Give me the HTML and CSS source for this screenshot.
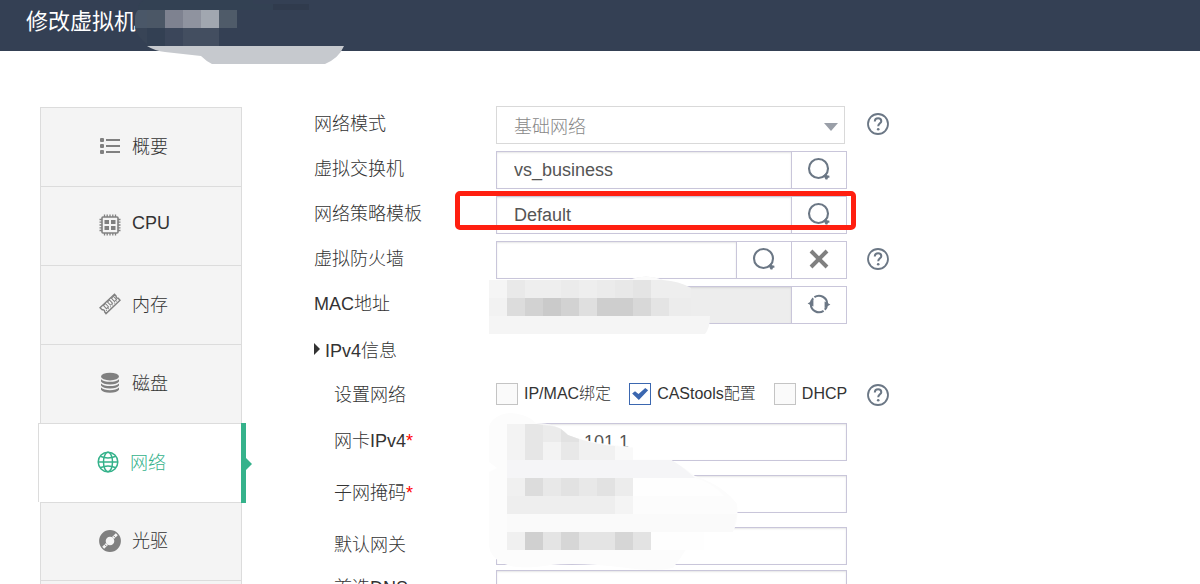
FILE: index.html
```html
<!DOCTYPE html>
<html lang="zh-CN">
<head>
	<meta charset="UTF-8">
	<meta name="viewport" content="width=device-width, initial-scale=1.0">
	<title>修改虚拟机</title>
	<link rel="stylesheet" href="styles.css">
</head>
<body>
	<!-- shared icons -->
	<svg class="sprite" aria-hidden="true">
		<symbol id="i-search" viewBox="0 0 24 24">
			<circle cx="11.5" cy="11.5" r="9.5" fill="none" stroke="currentColor" stroke-width="2.1"/>
			<path d="M16.4 18.6L18.6 16.4L20 18.2L22.4 18.8V20.8H21L20.4 22.6H18.6Z" fill="currentColor"/>
		</symbol>
		<symbol id="i-help" viewBox="0 0 22 22">
			<circle cx="11" cy="11" r="10" fill="none" stroke="currentColor" stroke-width="1.8"/>
			<path d="M7.8 8.6C7.8 6.5 9.2 5.3 11.1 5.3C13 5.3 14.3 6.5 14.3 8.2C14.3 10.2 11.2 10.6 11.2 13.3" fill="none" stroke="currentColor" stroke-width="2"/>
			<circle cx="11.2" cy="16.3" r="1.3" fill="currentColor"/>
		</symbol>
	</svg>

	<header class="top">
		<h1>修改虚拟机</h1>
		<svg class="mask mask-title" width="220" height="66" viewBox="0 0 220 66" aria-hidden="true">
			<path d="M9 0H118V4H174V10H3Q3 4 9 0Z" fill="#334153"/>
			<path d="M138 4H174V10H138Z" fill="#303b4d"/>
			<path d="M0 28V18Q0 13 3 10H12V28Z" fill="#4a5768"/>
			<path d="M12 10H30V28H12Z" fill="#4b5766"/>
			<path d="M30 10H48V28H30Z" fill="#7e8290"/>
			<path d="M48 10H66V28H48Z" fill="#8f939f"/>
			<path d="M66 10H84V28H66Z" fill="#a1a7b0"/>
			<path d="M84 10H102V28H84Z" fill="#4f5b69"/>
			<path d="M0 28H12V44Q3 38 0 28Z" fill="#384456"/>
			<path d="M12 28H30V46H12Z" fill="#334053"/>
			<path d="M30 28H48V46H30Z" fill="#3b465a"/>
			<path d="M48 28H84V46H48Z" fill="#434e60"/>
			<path d="M12 46H209Q204 58 190 64H77Q71 61 66 56L30 52Q20 51 12 46Z" fill="#c6c9ce"/>
		</svg>
	</header>

	<div class="page">
		<nav class="side">
			<a href="#summary">
				<svg class="icon" viewBox="0 0 22 22" aria-hidden="true" fill="currentColor">
					<rect x="1" y="3" width="4" height="4" rx="1"/>
					<rect x="1" y="9" width="4" height="4" rx="1"/>
					<rect x="1" y="15" width="4" height="4" rx="1"/>
					<path d="M7 4H21V6H7ZM7 10H21V12H7ZM7 16H21V18H7Z"/>
				</svg>
				<span>概要</span>
			</a>
			<a href="#cpu">
				<svg class="icon" viewBox="0 0 22 22" aria-hidden="true" fill="currentColor">
					<rect x="3" y="3" width="16" height="16" rx="1" fill="none" stroke="currentColor" stroke-width="1.6"/>
					<path d="M5.5 6H10V10H5.5ZM12 6H16.5V10H12ZM5.5 12H10V16H5.5ZM12 12H16.5V16H12Z"/>
					<path d="M5.5 .5V3M8.2 .5V3M11 .5V3M13.8 .5V3M16.5 .5V3M5.5 19V21.5M8.2 19V21.5M11 19V21.5M13.8 19V21.5M16.5 19V21.5M.5 5.5H3M.5 8.2H3M.5 11H3M.5 13.8H3M.5 16.5H3M19 5.5H21.5M19 8.2H21.5M19 11H21.5M19 13.8H21.5M19 16.5H21.5" stroke="currentColor" stroke-width="1.3"/>
				</svg>
				<span>CPU</span>
			</a>
			<a href="#memory">
				<svg class="icon" viewBox="0 0 22 22" aria-hidden="true" fill="none" stroke="currentColor">
					<path d="M1 14.8L15.5 1.3L17.2 3.2Q16.8 5.2 19.2 5.3L21 7.2L7 20.6L5.6 18.8Q6 16.6 3.2 16.8Z" stroke-width="1.4"/>
					<g stroke-width="1">
						<rect x="-1.4" y="-2.2" width="2.8" height="4.4" transform="translate(7 13.2) rotate(-43)"/>
						<rect x="-1.4" y="-2.2" width="2.8" height="4.4" transform="translate(11 9.6) rotate(-43)"/>
						<rect x="-1.4" y="-2.2" width="2.8" height="4.4" transform="translate(15 5.9) rotate(-43)"/>
						<path d="M7 18L18.6 7.2" stroke-dasharray="1.2 1.6"/>
					</g>
				</svg>
				<span>内存</span>
			</a>
			<a href="#disk">
				<svg class="icon" viewBox="0 0 22 22" aria-hidden="true" fill="currentColor">
					<ellipse cx="11" cy="4.6" rx="9" ry="3.9"/>
					<path d="M2 7.2Q5 9.8 11 9.8T20 7.2V9.4Q18 12.4 11 12.4T2 9.4Z"/>
					<path d="M2 11.4Q5 14 11 14T20 11.4V13.6Q18 16.6 11 16.6T2 13.6Z"/>
					<path d="M2 15.6Q5 18.2 11 18.2T20 15.6V17.8Q18 20.8 11 20.8T2 17.8Z"/>
				</svg>
				<span>磁盘</span>
			</a>
			<a href="#network" class="active" aria-current="page">
				<svg class="icon" viewBox="0 0 22 22" aria-hidden="true" fill="none" stroke="currentColor" stroke-width="1.5">
					<circle cx="11" cy="11" r="9.8"/>
					<ellipse cx="11" cy="11" rx="4.5" ry="9.8"/>
					<path d="M1.2 11H20.8M3.2 5.2Q11 8.6 18.8 5.2M3.2 16.8Q11 13.4 18.8 16.8"/>
				</svg>
				<span>网络</span>
			</a>
			<a href="#cdrom">
				<svg class="icon" viewBox="0 0 22 22" aria-hidden="true">
					<circle cx="11" cy="11" r="7.6" fill="none" stroke="currentColor" stroke-width="6.6"/>
					<path d="M14 8L17.8 4.2M4.2 17.8L8 14" stroke="#f4f4f4" stroke-width="2.8"/>
					<path d="M14.6 5.8L16.4 7.6M5.6 14.4L7.4 16.2" stroke="currentColor" stroke-width="1"/>
				</svg>
				<span>光驱</span>
			</a>
		</nav>

		<form class="form">
			<div class="row">
				<label for="mode">网络模式</label>
				<div class="field select">
					<select id="mode" disabled><option>基础网络</option></select>
				</div>
				<button type="button" class="help" aria-label="帮助"><svg><use href="#i-help"/></svg></button>
			</div>
			<div class="row">
				<label for="vswitch">虚拟交换机</label>
				<div class="field">
					<input type="text" id="vswitch" value="vs_business">
					<button type="button" class="addon" aria-label="选择虚拟交换机"><svg><use href="#i-search"/></svg></button>
				</div>
			</div>
			<div class="row">
				<label for="policy">网络策略模板</label>
				<div class="field">
					<input type="text" id="policy" value="Default">
					<button type="button" class="addon" aria-label="选择模板"><svg><use href="#i-search"/></svg></button>
					<span class="highlight"></span>
				</div>
			</div>
			<div class="row">
				<label for="firewall">虚拟防火墙</label>
				<div class="field">
					<input type="text" id="firewall">
					<button type="button" class="addon" aria-label="选择防火墙"><svg><use href="#i-search"/></svg></button>
					<button type="button" class="addon clear" aria-label="清除">
						<svg viewBox="0 0 24 24"><path d="M4 4L20 20M20 4L4 20" stroke="currentColor" stroke-width="4"/></svg>
					</button>
				</div>
				<button type="button" class="help" aria-label="帮助"><svg><use href="#i-help"/></svg></button>
			</div>
			<div class="row">
				<label for="mac">MAC地址</label>
				<div class="field">
					<input type="text" id="mac" disabled>
					<button type="button" class="addon" aria-label="刷新">
						<svg viewBox="0 0 24 24">
							<path d="M4 12A8.2 8.2 0 0 1 6.2 6.2M7.4 5.2A8.2 8.2 0 0 1 20.2 12M20 12A8.2 8.2 0 0 1 17.8 17.8M16.6 18.8A8.2 8.2 0 0 1 3.8 12" fill="none" stroke="currentColor" stroke-width="2"/>
							<path d="M.6 11.4L6.4 8V14.4ZM23.4 12.6L17.6 9.6V16Z" fill="currentColor"/>
						</svg>
					</button>
					<svg class="mask mask-mac" width="224" height="58" viewBox="0 0 224 58" aria-hidden="true">
						<path d="M140 4Q157 -3 174 4Q190 5 202 12V40H0V4Z" fill="#eee"/>
						<path d="M140 4Q157 -3 174 4Z" fill="#fbfbfb"/>
						<path d="M0 4H18V22H0Z" fill="#f5f5f5"/>
						<path d="M18 4H36V22H18Z" fill="#e9e9e9"/>
						<path d="M72 4H90V22H72ZM108 4H126V22H108Z" fill="#ebebeb"/>
						<path d="M126 4H144V22H126Z" fill="#e8e8e8"/>
						<path d="M144 4H162V22H144Z" fill="#e4e4e4"/>
						<path d="M0 22H18V40H0Z" fill="#f2f2f2"/>
						<path d="M18 22H36V40H18Z" fill="#dcdcdc"/>
						<path d="M36 22H54V40H36ZM72 22H90V40H72Z" fill="#d2d2d2"/>
						<path d="M54 22H72V40H54Z" fill="#cacaca"/>
						<path d="M90 22H108V40H90Z" fill="#dfdfdf"/>
						<path d="M108 22H144V40H108Z" fill="#cecece"/>
						<path d="M144 22H162V40H144Z" fill="#d8d8d8"/>
						<path d="M162 22H180V40H162Z" fill="#e4e4e4"/>
						<path d="M180 22H202V40H180Z" fill="#ececec"/>
						<path d="M0 40H221Q221 52 216 58H0Z" fill="#f5f5f5"/>
					</svg>
				</div>
			</div>

			<button type="button" class="toggle" aria-expanded="true">IPv4信息</button>

			<fieldset class="ipv4">
				<div class="row">
					<span class="name">设置网络</span>
					<div class="checks">
						<label><input type="checkbox">IP/MAC绑定</label>
						<label><input type="checkbox" checked>CAStools配置</label>
						<label><input type="checkbox">DHCP</label>
					</div>
					<button type="button" class="help" aria-label="帮助"><svg><use href="#i-help"/></svg></button>
				</div>
				<div class="row">
					<label for="ip">网卡IPv4<i>*</i></label>
					<div class="field">
						<input type="text" id="ip" class="tail" value="101.1">
						<svg class="mask mask-ip" width="250" height="160" viewBox="0 0 250 160" aria-hidden="true">
							<path d="M0 14Q5 2 22 1Q38 2 47 11Q68 11 79 23Q100 31 144 35V48H182Q192 53 206 64Q235 74 248 92Q250 108 244 120H205Q200 136 184 156Q165 160 138 156Q90 150 62 153Q20 160 6 146Q0 140 0 132V60L8 56L0 50Z" fill="#fcfcfc"/>
							<path d="M18 12H50Q70 12 79 23L90 27V48H18Z" fill="#f3f3f3"/>
							<path d="M36 12H48L54 13V48H36Z" fill="#e6e6e6"/>
							<path d="M54 13Q67 14 72 17V30H54Z" fill="#ebebeb"/>
							<path d="M72 17L79 23L90 27V30H72Z" fill="#e2e2e2"/>
							<path d="M72 30H90V48H72Z" fill="#e8e8e8"/>
							<path d="M90 27Q110 33 126 34V48H90Z" fill="#f1f1f1"/>
							<path d="M126 34L144 36V48H126Z" fill="#f9f9f9"/>
							<path d="M18 48H182Q192 53 206 66H18Z" fill="#f5f5f7"/>
							<path d="M18 66H36V84H18Z" fill="#f0f0f0"/>
							<path d="M36 66H54V84H36Z" fill="#dcdcdc"/>
							<path d="M54 66H72V84H54ZM90 66H108V84H90Z" fill="#e8e8e8"/>
							<path d="M72 66H90V84H72ZM108 66H126V84H108Z" fill="#e2e2e2"/>
							<path d="M126 66H144V84H126Z" fill="#ececec"/>
							<path d="M144 66H206Q222 70 236 84H144Z" fill="#fefefe"/>
							<path d="M18 84H126V102H18Z" fill="#eee"/>
							<path d="M126 84H144V102H126Z" fill="#f4f4f4"/>
							<path d="M18 102H248L244 120H18Z" fill="#fafafa"/>
							<path d="M18 120H36V138H18Z" fill="#f0f0f0"/>
							<path d="M36 120H54V138H36Z" fill="#d0d0d0"/>
							<path d="M54 120H72V138H54ZM90 120H126V138H90Z" fill="#e4e4e4"/>
							<path d="M72 120H90V138H72ZM126 120H144V138H126Z" fill="#d6d6d6"/>
							<path d="M144 120H162V138H144Z" fill="#e3e3e3"/>
							<path d="M162 120H215V138H162Z" fill="#fefefe"/>
						</svg>
					</div>
				</div>
				<div class="row">
					<label for="netmask">子网掩码<i>*</i></label>
					<div class="field"><input type="text" id="netmask"></div>
				</div>
				<div class="row">
					<label for="gateway">默认网关</label>
					<div class="field"><input type="text" id="gateway"></div>
				</div>
				<div class="row">
					<label for="dns">首选DNS</label>
					<div class="field"><input type="text" id="dns"></div>
				</div>
			</fieldset>
		</form>
	</div>
</body>
</html>
```

FILE: styles.css
```css
* {
	box-sizing: border-box;
}

body {
	margin: 0;
	background: #fff;
	color: #333;
	font-family: "Liberation Sans", "Noto Sans CJK SC", sans-serif;
	font-size: 18px;
	font-weight: 300;
}

input,
select,
button {
	font: inherit;
	color: inherit;
}

button {
	padding: 0;
	border: 0;
	background: none;
	cursor: pointer;
}

.sprite {
	display: none;
}

.mask {
	position: absolute;
	z-index: 1;
	pointer-events: none;
}

/* header */

.top {
	position: relative;
	display: flex;
	height: 51px;
	padding: 6px 26px 0;
	background: #344054;
}

.top h1 {
	margin: 0;
	color: #fff;
	font-size: 22px;
	font-weight: 400;
	line-height: 32px;
}

.mask-title {
	left: 135px;
	top: 0;
}

.page {
	display: flex;
	align-items: flex-start;
	gap: 72px;
	padding: 55px 40px 0;
}

/* side menu */

.side {
	flex: none;
	width: 202px;
	margin-top: 1px;
	padding-bottom: 40px;
	border: 1px solid #dcdcdc;
	border-top: 0;
	background: #f4f4f4;
}

.side a {
	position: relative;
	display: flex;
	align-items: center;
	gap: 11px;
	height: 79px;
	padding: 0 0 2px 58px;
	border-top: 1px solid #dcdcdc;
	color: #333;
	text-decoration: none;
}

.side a:last-child {
	border-bottom: 1px solid #dcdcdc;
}

.side span {
	padding-bottom: 3px;
}

.icon {
	width: 22px;
	height: 22px;
	color: #808080;
}

.side .active {
	margin: 0 0 0 -3px;
	border-left: 1px solid #dcdcdc;
	background: #fff;
	color: #35b28b;
}

.active .icon {
	color: #35b28b;
}

.active::before {
	content: "";
	position: absolute;
	top: -1px;
	right: -5px;
	width: 5px;
	height: 80px;
	background: #35b28b;
}

.active::after {
	content: "";
	position: absolute;
	top: 33px;
	right: -11px;
	border: 7px solid transparent;
	border-left-color: #35b28b;
	border-right: 0;
}

/* form */

.form {
	flex: 1;
	min-width: 0;
}

.row {
	display: grid;
	grid-template-columns: 182px minmax(0, 351px) 22px;
	align-items: center;
	min-height: 38px;
	margin-bottom: 7px;
}

.row > label,
.row > .name {
	padding-bottom: 6px;
}

.row i {
	color: #f00;
	font-style: normal;
}

.field {
	position: relative;
	display: flex;
}

.field input,
.field select {
	flex: 1;
	min-width: 0;
	width: 100%;
	height: 38px;
	margin: 0;
	padding: 0 17px;
	border: 1px solid #c9c6da;
	border-radius: 0;
	background: #fff;
	box-shadow: inset 0 1px 2px rgba(0, 0, 0, .1);
	color: #555;
}

.field input:disabled {
	background: #ededed;
}

.field .tail {
	padding-left: 87px;
}

.field select {
	appearance: none;
	padding-top: 3px;
	border-color: #d9d9d9;
	box-shadow: none;
	color: #888;
	opacity: 1;
}

.select {
	margin-right: 2px;
}

.select::after {
	content: "";
	position: absolute;
	top: 17px;
	right: 7px;
	border: 7px solid transparent;
	border-top: 8px solid #9a9fa8;
	border-bottom: 0;
}

.addon {
	display: flex;
	flex: none;
	align-items: center;
	justify-content: center;
	width: 56px;
	height: 38px;
	margin-left: -1px;
	padding-bottom: 3px;
	border: 1px solid #c9c6da;
	background: #fff;
	color: #6b7785;
}

.addon svg {
	width: 24px;
	height: 24px;
}

.clear {
	color: #808080;
}

.help {
	width: 22px;
	height: 22px;
	margin: 0 0 3px 20px;
	color: #6b7785;
}

.help svg {
	display: block;
	width: 22px;
	height: 22px;
}

.highlight {
	position: absolute;
	top: -5px;
	left: -41px;
	right: -9px;
	height: 39px;
	border: 5px solid #ff1f10;
	border-radius: 5px;
	pointer-events: none;
}

.mask-mac {
	left: -7px;
	top: -10px;
}

.mask-ip {
	left: -7px;
	top: -11px;
}

/* ipv4 section */

.toggle {
	display: flex;
	align-items: center;
	gap: 5px;
	height: 36px;
}

.toggle::before {
	content: "";
	border: 6px solid transparent;
	border-left-color: #333;
	border-right: 0;
}

.ipv4 {
	min-width: 0;
	margin: 10px 0 0;
	padding: 0 0 0 20px;
	border: 0;
}

.ipv4 .row {
	grid-template-columns: 162px minmax(0, 351px) 22px;
	margin-bottom: 14px;
}

.ipv4 .row:first-child {
	margin-bottom: 8px;
}

.ipv4 .row:nth-last-child(2) {
	margin-bottom: 5px;
}

.checks {
	display: flex;
	gap: 18px;
	padding-bottom: 4px;
	font-size: 16px;
	line-height: 22px;
	white-space: nowrap;
}

.checks label {
	display: flex;
	align-items: center;
	gap: 6px;
	height: 22px;
}

.checks input {
	appearance: none;
	display: grid;
	place-items: center;
	width: 22px;
	height: 22px;
	margin: 0;
	border: 1px solid #c4c4c4;
	background: #fafafa;
}

.checks input:checked {
	border-color: #3b67b0;
	background: #fff;
}

.checks input:checked::before {
	content: "";
	width: 16px;
	height: 12px;
	background: #3b67b0;
	clip-path: polygon(0 45%, 18% 27%, 40% 50%, 82% 0, 100% 18%, 42% 100%);
}
```
